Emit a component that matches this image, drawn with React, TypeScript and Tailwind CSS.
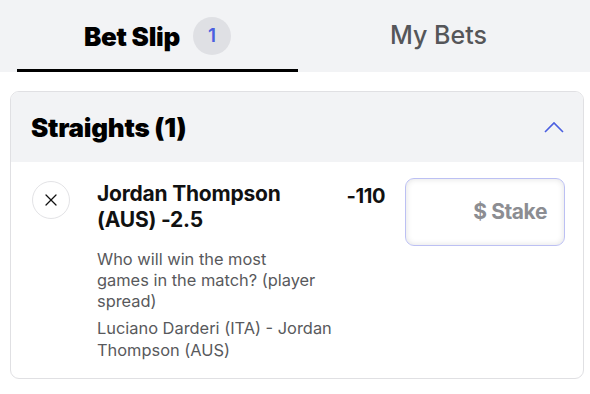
import { X } from 'lucide-react';

function Tabs() {
  return (
    <div className="flex h-[72px] bg-[#f2f3f5] pl-[17px]">
      <div className="relative flex w-[281px] items-center justify-center gap-[13px]">
        <span className="text-[26px] font-black tracking-[-0.01em] text-black">Bet Slip</span>
        <span className="flex h-[38px] w-[38px] items-center justify-center rounded-full bg-[#dfe0e4] text-[19px] font-semibold text-[#4b5fe0]">
          1
        </span>
        <div className="absolute bottom-0 left-0 h-[3px] w-full bg-black" />
      </div>
      <div className="flex w-[281px] items-center justify-center">
        <span className="text-[25px] font-medium text-[#555659]">My Bets</span>
      </div>
    </div>
  );
}

function StraightBet() {
  return (
    <div className="flex pl-[21px] pr-[18px] pt-[16px] pb-[17px]">
      <button className="mt-[3px] flex h-[38px] w-[38px] shrink-0 items-center justify-center rounded-full border border-[#e3e3e6] bg-white text-[#111]">
        <X size={20} strokeWidth={1.5} />
      </button>
      <div className="ml-[27px] w-[245px] pt-[3px]">
        <div className="text-[21px] font-bold leading-[26px] tracking-[-0.01em] text-[#111]">
          Jordan Thompson
          <br />
          (AUS) -2.5
        </div>
        <p className="mt-[16px] text-[16.4px] leading-[21px] text-[#58595c]">
          Who will win the most
          <br />
          games in the match? (player
          <br />
          spread)
        </p>
        <p className="mt-[5px] text-[16.4px] leading-[22px] text-[#58595c]">
          Luciano Darderi (ITA) - Jordan
          <br />
          Thompson (AUS)
        </p>
      </div>
      <div className="flex-1 pt-[5px] text-right text-[20px] font-bold leading-[26px] tracking-[-0.02em] text-[#111]">
        -110
      </div>
      <div className="ml-[20px] flex h-[68px] w-[160px] shrink-0 items-center justify-end rounded-[9px] border border-[#bcc0f3] bg-white pr-[17px] shadow-[inset_0_0_6px_rgba(0,0,0,0.12)]">
        <span className="text-[21px] font-bold tracking-[-0.02em] text-[#8c8d92]">$ Stake</span>
      </div>
    </div>
  );
}

export default function App() {
  return (
    <div className="h-[394px] w-[590px] overflow-hidden bg-white" style={{ fontFamily: 'Inter, "Noto Sans", sans-serif' }}>
      <Tabs />
      <div className="ml-[10px] mr-[6px] mt-[19px] overflow-hidden rounded-[9px] border border-[#e0e0e3]">
        <div className="flex h-[70px] items-center justify-between bg-[#f2f3f5] pl-[20px] pr-[19px]">
          <span className="text-[26px] font-black tracking-[-0.01em] text-black">Straights (1)</span>
          <svg width="20" height="12" viewBox="0 0 20 12" fill="none" stroke="#4b5fe0" strokeWidth="1.6">
            <path d="M1 11 L10 2 L19 11" />
          </svg>
        </div>
        <StraightBet />
      </div>
    </div>
  );
}
